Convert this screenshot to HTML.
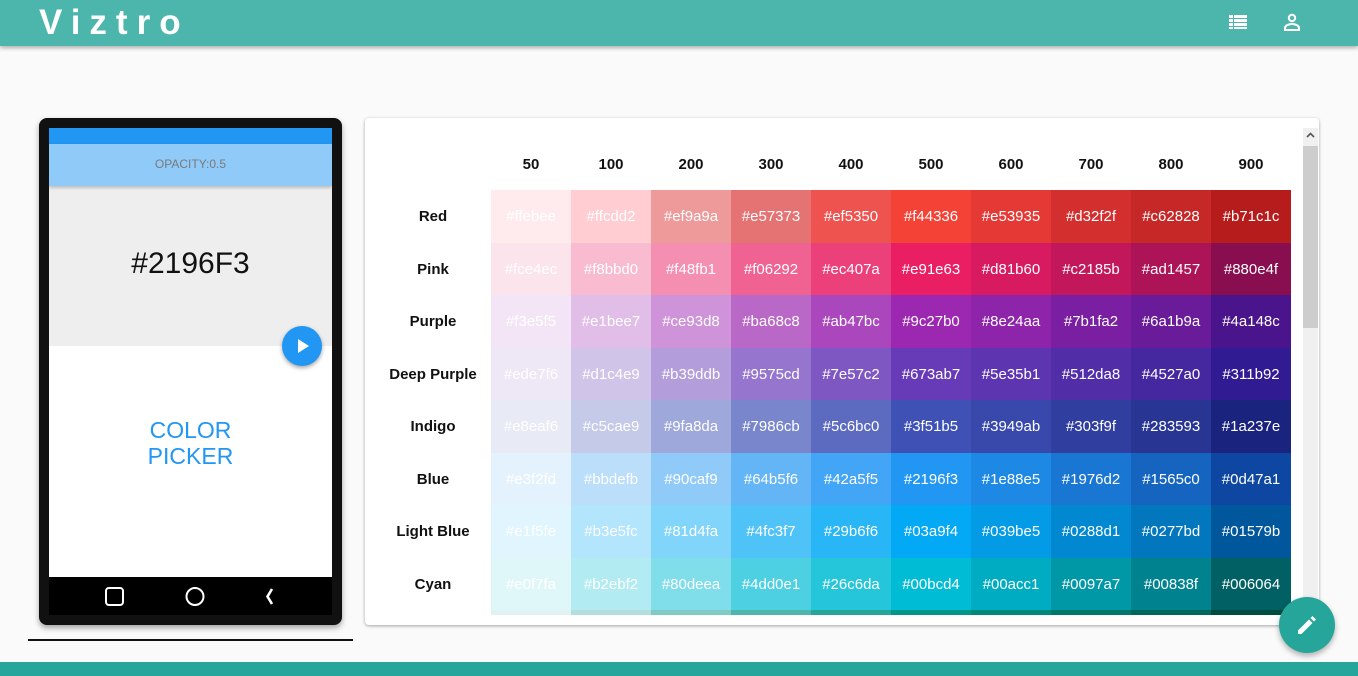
<!DOCTYPE html>
<html><head><meta charset="utf-8"><style>
*{margin:0;padding:0;box-sizing:border-box}
body{width:1358px;height:676px;overflow:hidden;background:#fafafa;font-family:"Liberation Sans",sans-serif;position:relative}
.hdr{position:absolute;left:0;top:0;width:1358px;height:46px;background:#4db6ac;box-shadow:0 2px 4px rgba(0,0,0,.3)}
.logo{position:absolute;left:39px;top:2px;color:#fff;font-weight:bold;font-size:35px;letter-spacing:9px;line-height:42px}
.foot{position:absolute;left:0;top:662px;width:1358px;height:14px;background:#26a69a}
.phone{position:absolute;left:39px;top:118px;width:303px;height:507px;background:#111;border-radius:8px;box-shadow:0 3px 6px rgba(0,0,0,.35)}
.scr{position:absolute;left:10px;top:10px;width:283px;height:487px;overflow:hidden}
.card{position:absolute;left:365px;top:118px;width:954px;height:507px;background:#fff;border-radius:4px;box-shadow:0 1px 3px rgba(0,0,0,.35);overflow:hidden}
.cell{position:absolute;width:80px;height:53px;color:#fff;font-size:15px;text-align:center;line-height:53px}
.lbl{position:absolute;left:0;width:136px;text-align:center;font-weight:bold;font-size:15px;line-height:53px;color:#111}
.hd{position:absolute;top:38px;width:80px;text-align:center;font-weight:bold;font-size:15px;color:#111}
</style></head><body>
<div class="hdr"><div class="logo">Viztro</div>
<svg style="position:absolute;left:1229px;top:14px" width="19" height="16" viewBox="0 0 19 16" fill="#fff"><rect x="0" y="1" width="4" height="3"/><rect x="5" y="1" width="13" height="3"/><rect x="0" y="5" width="4" height="3"/><rect x="5" y="5" width="13" height="3"/><rect x="0" y="9" width="4" height="3"/><rect x="5" y="9" width="13" height="3"/><rect x="0" y="13" width="4" height="2"/><rect x="5" y="13" width="13" height="2"/></svg>
<svg style="position:absolute;left:1283px;top:13px" width="18" height="18" viewBox="0 0 18 18" fill="none" stroke="#fff" stroke-width="2"><circle cx="9" cy="5" r="3.2"/><path d="M2 17v-2c0-2.5 4-4 7-4s7 1.5 7 4v2z"/></svg>
</div>

<div class="phone"><div class="scr">
<div style="position:absolute;left:0;top:0;width:283px;height:16px;background:#2196f3"></div>
<div style="position:absolute;left:0;top:16px;width:283px;height:42px;background:#90caf9;color:#7a7a7a;font-size:12px;text-align:center;line-height:40px;box-shadow:0 2px 3px rgba(0,0,0,.2);z-index:2">OPACITY:0.5</div>
<div style="position:absolute;left:0;top:58px;width:283px;height:160px;background:#eee;color:#111;font-size:30px;text-align:center;line-height:156px">#2196F3</div>
<div style="position:absolute;left:0;top:218px;width:283px;height:231px;background:#fff;color:#2196f3;font-size:23px;text-align:center;padding-top:71px;line-height:26px">COLOR<br>PICKER</div>
<div style="position:absolute;left:233px;top:198px;width:40px;height:40px;border-radius:50%;background:#2196f3;box-shadow:0 2px 4px rgba(0,0,0,.35)"><svg width="40" height="40"><path d="M16 13l11 7-11 7z" fill="#fff"/></svg></div>
<div style="position:absolute;left:0;top:449px;width:283px;height:38px;background:#000">
<svg width="283" height="38" fill="none" stroke="#fff" stroke-width="2"><rect x="57" y="11" width="17" height="17" rx="3"/><circle cx="146" cy="19.5" r="8.5"/><path d="M223 12l-4.5 7.5 4.5 7.5" stroke-width="2.6"/></svg></div>
</div></div>
<div style="position:absolute;left:28px;top:639px;width:325px;height:2px;background:#111"></div>

<div class="card" id="card"></div>
<div style="position:absolute;left:1279px;top:597px;width:56px;height:56px;border-radius:50%;background:#26a69a;box-shadow:0 3px 6px rgba(0,0,0,.3)"><svg width="56" height="56"><path d="M19 37v-3.5l11-11 3.5 3.5-11 11z M31.5 21l2-2 3.5 3.5-2 2z" fill="#fff"/></svg></div>
<div class="foot"></div>

<script>
var cols=['50','100','200','300','400','500','600','700','800','900'];
var rows=[['Red','ffebee','ffcdd2','ef9a9a','e57373','ef5350','f44336','e53935','d32f2f','c62828','b71c1c'],
['Pink','fce4ec','f8bbd0','f48fb1','f06292','ec407a','e91e63','d81b60','c2185b','ad1457','880e4f'],
['Purple','f3e5f5','e1bee7','ce93d8','ba68c8','ab47bc','9c27b0','8e24aa','7b1fa2','6a1b9a','4a148c'],
['Deep Purple','ede7f6','d1c4e9','b39ddb','9575cd','7e57c2','673ab7','5e35b1','512da8','4527a0','311b92'],
['Indigo','e8eaf6','c5cae9','9fa8da','7986cb','5c6bc0','3f51b5','3949ab','303f9f','283593','1a237e'],
['Blue','e3f2fd','bbdefb','90caf9','64b5f6','42a5f5','2196f3','1e88e5','1976d2','1565c0','0d47a1'],
['Light Blue','e1f5fe','b3e5fc','81d4fa','4fc3f7','29b6f6','03a9f4','039be5','0288d1','0277bd','01579b'],
['Cyan','e0f7fa','b2ebf2','80deea','4dd0e1','26c6da','00bcd4','00acc1','0097a7','00838f','006064'],
['Teal','e0f2f1','b2dfdb','80cbc4','4db6ac','26a69a','009688','00897b','00796b','00695c','004d40']];
var h='';
cols.forEach(function(c,i){h+='<div class="hd" style="left:'+(126+i*80)+'px">'+c+'</div>'});
rows.forEach(function(r,j){var t=72+j*52.5;
 if(j<8)h+='<div class="lbl" style="top:'+t+'px">'+r[0]+'</div>';
 for(var i=0;i<10;i++){var top=t, ht=(j==8)?5:53; h+='<div class="cell" style="left:'+(126+i*80)+'px;top:'+top+'px;height:'+ht+'px;background:#'+r[i+1]+'">'+(j<8?'#'+r[i+1]:'')+'</div>';}
});
h+='<div style="position:absolute;left:938px;top:10px;width:15px;height:497px;background:#f0f0f0"></div><div style="position:absolute;left:938px;top:28px;width:15px;height:182px;background:#cdcdcd"></div><svg style="position:absolute;left:940px;top:12px" width="11" height="10"><path d="M2 7l3.5-3.5L9 7" stroke="#555" stroke-width="1.6" fill="none"/></svg>';
document.getElementById('card').innerHTML=h;
</script>
</body></html>
